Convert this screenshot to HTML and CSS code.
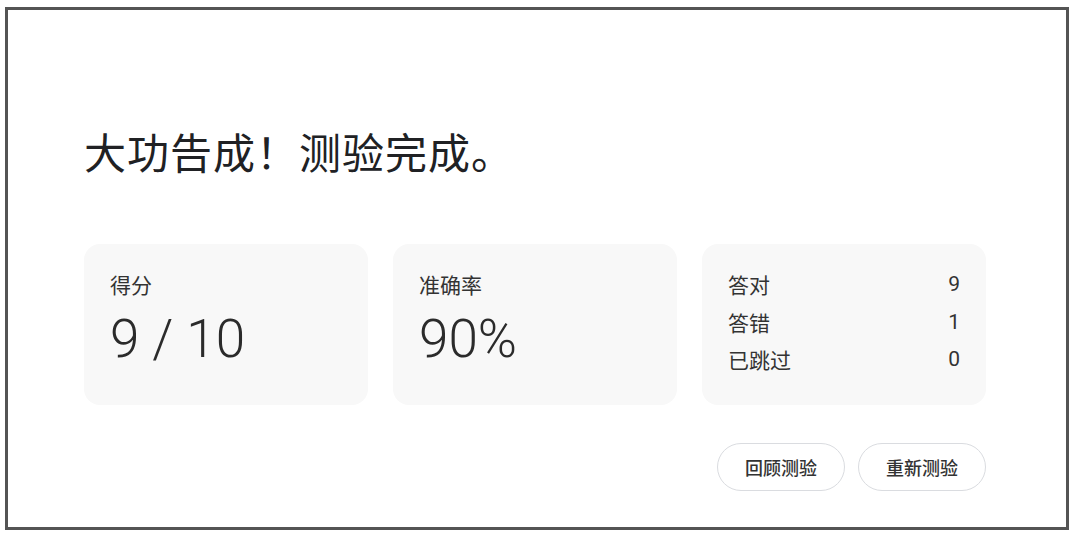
FILE: index.html
```html
<!DOCTYPE html>
<html lang="zh-CN">
<head>
<meta charset="utf-8">
<title>测验完成</title>
<link rel="stylesheet" href="styles.css">
</head>
<body>
<div class="frame">
  <div class="content">
    <h1 class="title">大功告成！测验完成。</h1>
    <div class="cards">
      <div class="card">
        <div class="label">得分</div>
        <div class="big">9 / 10</div>
      </div>
      <div class="card">
        <div class="label">准确率</div>
        <div class="big">90%</div>
      </div>
      <div class="card card-list">
        <div class="row"><span class="label">答对</span><span class="val">9</span></div>
        <div class="row"><span class="label">答错</span><span class="val">1</span></div>
        <div class="row"><span class="label">已跳过</span><span class="val">0</span></div>
      </div>
    </div>
    <div class="actions">
      <button class="btn">回顾测验</button>
      <button class="btn">重新测验</button>
    </div>
  </div>
</div>
</body>
</html>
```

FILE: styles.css
```css
html, body {
  margin: 0;
  padding: 0;
  background: #ffffff;
}
body {
  font-family: Roboto, "Noto Sans CJK SC", sans-serif;
  color: #202124;
}
.frame {
  margin: 7px 0 0 5px;
  width: 1058px;
  height: 517px;
  border: 3px solid #545454;
  background: #fff;
}
.content {
  width: 902px;
  margin-left: 76px;
  padding-top: 116px;
  display: flex;
  flex-direction: column;
}
.title {
  margin: 0;
  font-family: "Noto Sans CJK SC", sans-serif;
  font-weight: 400;
  font-size: 42px;
  letter-spacing: 1px;
  line-height: 50px;
  color: #202124;
}
.cards {
  margin-top: 68px;
  display: grid;
  grid-template-columns: repeat(3, 284px);
  column-gap: 25px;
}
.card {
  background: #f8f8f8;
  border-radius: 16px;
  height: 161px;
  box-sizing: border-box;
  padding: 26px 26px 0 26px;
  display: flex;
  flex-direction: column;
}
.label {
  font-family: "Noto Sans CJK SC", sans-serif;
  font-size: 21px;
  line-height: 28px;
  color: #333;
}
.big {
  margin-top: 9px;
  font-family: Roboto, sans-serif;
  font-weight: 300;
  font-size: 53px;
  line-height: 64px;
  color: #2b2b2b;
}
.card-list {
  gap: 9.5px;
}
.row {
  display: flex;
  justify-content: space-between;
  align-items: center;
  height: 28px;
}
.val {
  font-family: Roboto, sans-serif;
  font-size: 21px;
  line-height: 28px;
  color: #333;
}
.actions {
  margin-top: 38px;
  display: flex;
  justify-content: flex-end;
  gap: 13px;
}
.btn {
  height: 48px;
  width: 128px;
  border: 1px solid #dadce0;
  border-radius: 24px;
  background: #fff;
  font-family: "Noto Sans CJK SC", sans-serif;
  font-size: 18px;
  font-weight: 500;
  color: #333;
  padding: 0;
}
```
